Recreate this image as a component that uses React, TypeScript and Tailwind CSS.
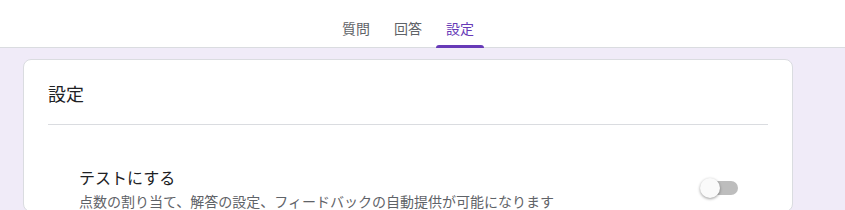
const tabs = ["質問", "回答", "設定"];

function Toggle() {
  return (
    <div className="relative h-5 w-[38px]">
      <div className="absolute left-[2px] top-[3px] h-[14px] w-[36px] rounded-full bg-[#bdbdbd]" />
      <div className="absolute left-0 top-0 h-5 w-5 rounded-full bg-[#fafafa] shadow-[0_1px_3px_rgba(0,0,0,0.4)]" />
    </div>
  );
}

export default function App() {
  return (
    <div
      className="min-h-screen bg-[#f0ebf8] text-[#202124]"
      style={{ fontFamily: '"Noto Sans CJK JP", "Noto Sans", sans-serif' }}
    >
      <header className="flex h-[48px] justify-center border-b border-[#dadce0] bg-white pr-[29px]">
        <nav className="flex gap-1">
          {tabs.map((tab) => {
            const active = tab === "設定";
            return (
              <div
                key={tab}
                className={
                  active
                    ? "relative flex w-12 items-center justify-center pt-[9px] text-sm text-[#673ab7]"
                    : "relative flex w-12 items-center justify-center pt-[9px] text-sm text-[#5f6368]"
                }
              >
                {tab}
                {active && (
                  <span className="absolute bottom-[-1px] left-0 h-[3px] w-12 rounded-t-[3px] bg-[#673ab7]" />
                )}
              </div>
            );
          })}
        </nav>
      </header>

      <section className="ml-[23px] mt-[11px] w-[770px] rounded-lg border border-[#dadce0] bg-white px-6">
        <h2 className="flex h-[64px] items-end pb-[19px] text-lg leading-6">設定</h2>
        <div className="border-t border-[#dadce0]" />
        <div className="flex items-center justify-between pl-[31px] pr-[30px] pt-[40px]">
          <div>
            <p className="text-base leading-6">テストにする</p>
            <p className="mt-[2px] text-sm leading-5 text-[#5f6368]">
              点数の割り当て、解答の設定、フィードバックの自動提供が可能になります
            </p>
          </div>
          <Toggle />
        </div>
      </section>
    </div>
  );
}
